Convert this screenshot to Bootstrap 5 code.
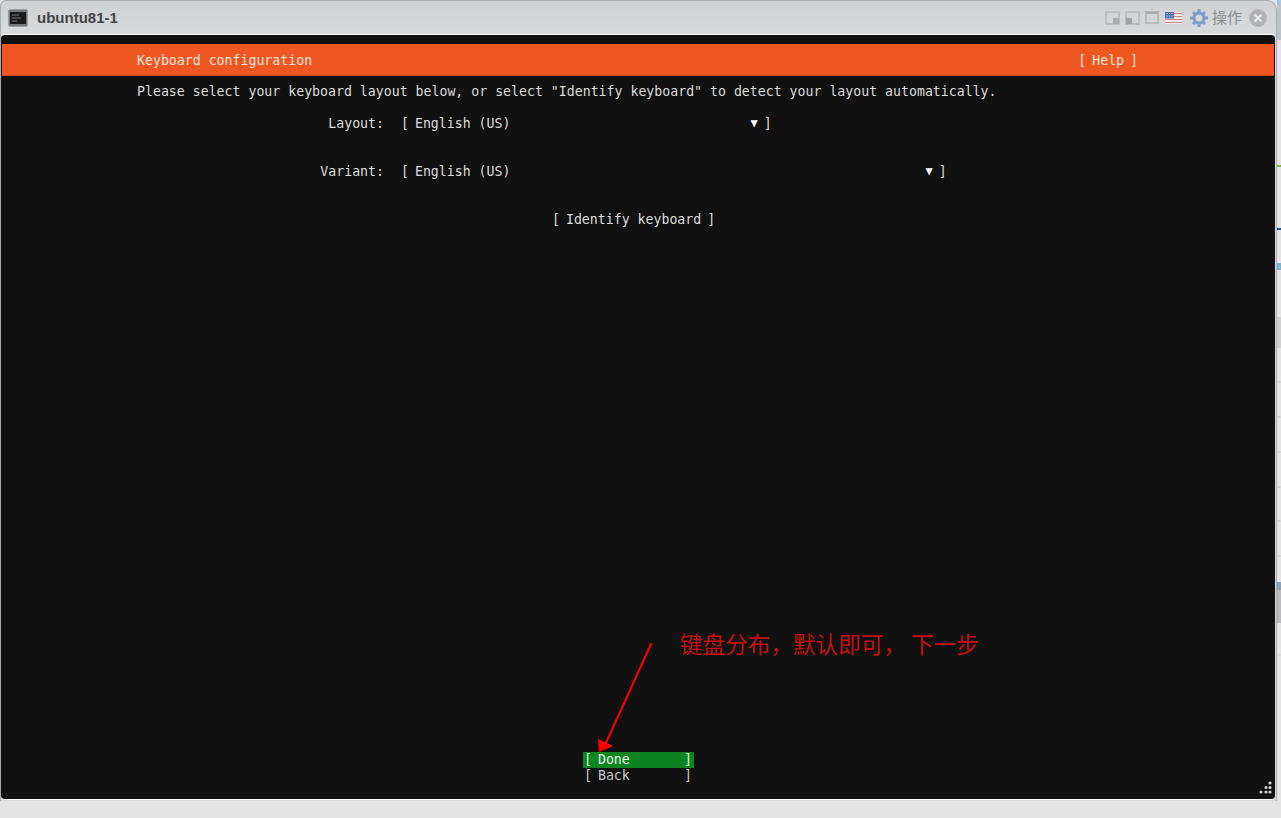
<!DOCTYPE html>
<html lang="zh"><head><meta charset="utf-8"><title>ubuntu81-1</title>
<link rel="stylesheet" href="https://cdn.jsdelivr.net/npm/bootstrap@5.3.0/dist/css/bootstrap.min.css">
<script src="https://cdn.jsdelivr.net/npm/bootstrap@5.3.0/dist/js/bootstrap.bundle.min.js"></script>
<style>
html,body{height:818px;overflow:hidden;background:#e4e4e4}
.vm-window{height:801px;width:1277px;background:linear-gradient(#cfd1d3,#d8dadb 34px);border:1px solid #a9acae;border-bottom:0;border-radius:6px 10px 0 0;}
.vm-title{height:33px;padding:0 0 0 7px}
.vm-name{font:700 15px/1 "Liberation Sans",sans-serif;color:#444;margin-left:9px}
.vm-actions{margin-top:1px;margin-right:9px}
.vm-op{font:15px/1 "Noto Sans CJK SC",sans-serif;color:#8d8f91;margin:0 3px 0 0;padding-bottom:3px}
.vm-screen{position:relative;height:766px;background:#111;border:1px solid #fff;border-left:0;border-right:0;border-radius:4px;width:1274px;font:13.22px/16px "DejaVu Sans Mono",monospace;color:#dcdcdc;padding:9px 0 15px 0;overflow:hidden}
.vm-screen span,.tui-row{white-space:pre}
.tui-head{height:32px;background:#ee5721;border-bottom:1px solid #c94c1d;color:#fbe4da;padding:9px 136px 0 135px;margin:0 1px;justify-content:space-between}
.tui-lb{margin-right:-2px}
.tui-rb{margin-left:-2px}
.tui-btn span{word-spacing:-2px}
.tui-row{height:16px;padding-left:136px}
.tui-prompt{margin-top:8px}
.tui-field{margin-top:16px;padding-left:0}
.tui-variant{margin-top:32px;padding-left:0}
.tui-identify{margin-top:32px;padding-left:551px}
.tui-label{display:inline-block;width:383px;text-align:right}
.tui-value{display:inline-block;margin-left:17px}
.tui-caret{display:inline-block;font-size:12px;line-height:1;color:#fff;vertical-align:1px}
.caret-a{margin-left:240px}
.caret-b{margin-left:415px}
.tui-end{margin-left:6px}
.tui-foot{margin-top:auto;margin-left:582px;width:111px}
.tui-btn{height:16px;padding:0 2px 0 1px;justify-content:space-between}
.tui-done{background:#0e8420;color:#e8f3e9}
.tui-back{color:#c9c9c9}
.note{position:absolute;left:679px;top:595px;font:22.6px/28px "Noto Sans CJK SC",sans-serif;color:#c41010}
.arrow{position:absolute;left:590px;top:600px}
.grip{position:absolute;right:2px;bottom:3px}
.side-strip{position:absolute;left:1277px;top:0}
</style></head><body>
<svg class="side-strip" width="4" height="818" viewBox="0 0 4 818"><rect width="4" height="5" fill="#a9c6de"/><rect y="5" width="4" height="35" fill="#bcc1c6"/><rect y="165" width="4" height="2" fill="#7fb54a"/><rect y="228" width="4" height="2" fill="#274f7a"/><rect y="263" width="4" height="7" fill="#7fb2c8"/><rect y="317" width="4" height="31" fill="#d0d0d0"/><path d="M0 382h4M0 417h4M0 452h4M0 487h4M0 521h4M0 556h4" stroke="#c8c8c8"/><rect y="582" width="4" height="8" fill="#8d9fb0"/><rect y="590" width="4" height="33" fill="#bcbcbe"/><path d="M0 655h4" stroke="#cfcfcf"/></svg>
<div class="vm-window">
 <div class="vm-title d-flex align-items-center">
  <svg width="20" height="18" viewBox="0 0 20 18"><rect x=".5" y=".5" width="19" height="17" rx="1.5" fill="#77787a" stroke="#9a9b9d"/><rect x="2" y="3" width="16" height="12" fill="#1c1c1c"/><path d="M4 6h7M4 9h9M4 12h5" stroke="#777"/></svg>
  <span class="vm-name">ubuntu81-1</span>
  <div class="vm-actions ms-auto d-flex align-items-center gap-1">
   <svg width="16" height="14" viewBox="0 0 16 14"><rect x="1" y="1" width="13" height="12" fill="none" stroke="#bbbdbf" stroke-width="2"/><rect x="8" y="7" width="6" height="6" fill="#a9abad"/></svg>
   <svg width="16" height="14" viewBox="0 0 16 14"><rect x="1" y="1" width="13" height="12" fill="none" stroke="#bbbdbf" stroke-width="2"/><rect x="1" y="7" width="6" height="6" fill="#a0a2a4"/></svg>
   <svg width="16" height="14" viewBox="0 0 16 14"><rect x="1" y="1" width="12" height="11" fill="none" stroke="#b5b7b9" stroke-width="2"/><rect x="1" y="1" width="12" height="2" fill="#a9abad"/></svg>
   <svg width="17" height="12" viewBox="0 0 17 12"><rect width="17" height="12" fill="#eee"/><path d="M0 1.500h17M0 4.500h17M0 7.500h17M0 10.500h17" stroke="#d88080"/><rect width="9" height="6.500" fill="#5573b0"/><path d="M1.500 1.500h1M4 1.500h1M6.500 1.500h1M1.500 4h1M4 4h1M6.500 4h1" stroke="#dfe5f0"/></svg>
   <svg width="18" height="18" viewBox="0 0 18 18" class="ms-1"><g fill="#7d9ccb"><circle cx="9" cy="9" r="6.500"/><path d="M7.500 0h3v4h-3zM7.500 14h3v4h-3zM0 7.500h4v3H0zM14 7.500h4v3h-4zM2 4l2-2 3 3-2 2zM14 2l2 2-3 3-2-2zM2 14l3-3 2 2-3 3zM13 11l3 3-2 2-3-3z"/></g><circle cx="9" cy="9" r="3.500" fill="#d5d7d9"/></svg>
   <span class="vm-op">操作</span>
   <svg width="18" height="18" viewBox="0 0 18 18"><circle cx="9" cy="9" r="9" fill="#b0b2b4"/><path d="M5.500 5.500l7 7M12.500 5.500l-7 7" stroke="#e6e7e8" stroke-width="2.400"/></svg>
  </div>
 </div>
 <div class="vm-screen d-flex flex-column">
  <div class="tui-head d-flex"><span>Keyboard configuration</span><span><span class="tui-lb">[</span> Help <span class="tui-rb">]</span></span></div>
  <div class="tui-row tui-prompt">Please select your keyboard layout below, or select "Identify keyboard" to detect your layout automatically.</div>
  <div class="tui-row tui-field"><span class="tui-label">Layout:</span><span class="tui-value"><span class="tui-lb">[</span> English (US)</span><span class="tui-caret caret-a">▼</span><span class="tui-end">]</span></div>
  <div class="tui-row tui-variant"><span class="tui-label">Variant:</span><span class="tui-value"><span class="tui-lb">[</span> English (US)</span><span class="tui-caret caret-b">▼</span><span class="tui-end">]</span></div>
  <div class="tui-row tui-identify"><span class="tui-lb">[</span> Identify keyboard <span class="tui-rb">]</span></div>
  <div class="tui-foot">
   <div class="tui-btn tui-done d-flex"><span>[ Done</span><span>]</span></div>
   <div class="tui-btn tui-back d-flex"><span>[ Back</span><span>]</span></div>
  </div>
  <svg class="arrow" width="70" height="125" viewBox="0 0 70 125"><path d="M60.500 8 14 110" stroke="#f00" stroke-width="2" fill="none"/><path d="M8 117 7 104 22 111z" fill="#f00"/></svg>
  <div class="note">键盘分布，默认即可， 下一步</div>
  <svg class="grip" width="15" height="15" viewBox="0 0 15 15" fill="#cfcfcf"><circle cx="12" cy="2" r="1.600"/><circle cx="8" cy="6.500" r="1.600"/><circle cx="12" cy="6.500" r="1.600"/><circle cx="3" cy="11" r="1.600"/><circle cx="8" cy="11" r="1.600"/><circle cx="12" cy="11" r="1.600"/></svg>
 </div>
</div>
</body></html>
